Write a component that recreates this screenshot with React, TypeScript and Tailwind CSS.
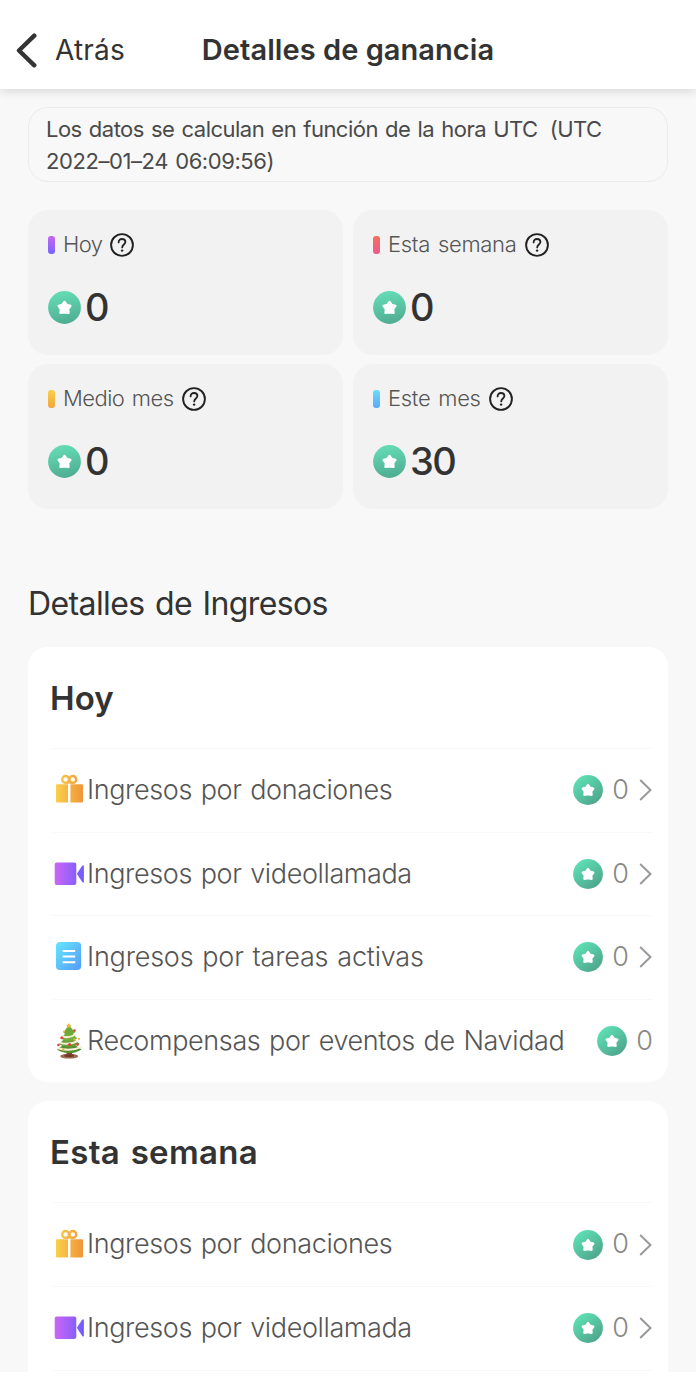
import { useId } from "react";
import type { ReactNode } from "react";
import { clsx } from "clsx";

type IncomeKind = "gift" | "video" | "task" | "christmas";

interface SummaryItem {
  label: string;
  value: number;
  marker: string;
  tracking: string;
}

interface IncomeRow {
  kind: IncomeKind;
  label: string;
  value: number;
  tracking: string;
  link?: boolean;
}

const summary: SummaryItem[] = [
  { label: "Hoy", value: 0, marker: "from-[#c964f2] to-[#7562fb]", tracking: "tracking-[-0.6px]" },
  {
    label: "Esta semana",
    value: 0,
    marker: "from-[#f0715a] to-[#f0588a]",
    tracking: "tracking-[-0.3px]",
  },
  {
    label: "Medio mes",
    value: 0,
    marker: "from-[#f8cf4c] to-[#f0a53c]",
    tracking: "tracking-[-0.55px]",
  },
  {
    label: "Este mes",
    value: 30,
    marker: "from-[#6bdcfb] to-[#5aa8f8]",
    tracking: "tracking-[-0.3px]",
  },
];

const gift: IncomeRow = {
  kind: "gift",
  label: "Ingresos por donaciones",
  value: 0,
  tracking: "tracking-[-0.38px]",
  link: true,
};

const video: IncomeRow = {
  kind: "video",
  label: "Ingresos por videollamada",
  value: 0,
  tracking: "tracking-[-0.38px]",
  link: true,
};

const task: IncomeRow = {
  kind: "task",
  label: "Ingresos por tareas activas",
  value: 0,
  tracking: "tracking-[-0.2px]",
  link: true,
};

const christmas: IncomeRow = {
  kind: "christmas",
  label: "Recompensas por eventos de Navidad",
  value: 0,
  tracking: "tracking-[-0.38px]",
};

export default function App() {
  return (
    <div className="h-[1389px] w-[696px] overflow-hidden bg-white font-['Inter','Liberation_Sans',sans-serif] text-[#333333]">
      <div className="flex h-[1372px] flex-col overflow-hidden bg-[#f8f8f8]">
        <Header />

        <main className="flex flex-col px-7 pt-[18px]">
          <p className="h-[75px] rounded-[20px] border border-[#ebebeb] pt-[5px] pl-[17px] text-[22px] leading-8 tracking-[-0.52px] whitespace-nowrap text-[#4a4a4a] [word-spacing:1.5px]">
            <span className="block">
              Los datos se calculan en función de la hora UTC
              <span className="ml-3">(UTC</span>
            </span>
            <span className="block tracking-[-0.43px]">2022–01–24 06:09:56)</span>
          </p>

          <section className="mt-7 grid grid-cols-2 gap-x-2.5 gap-y-[9px]">
            {summary.map((item) => (
              <SummaryCard key={item.label} {...item} />
            ))}
          </section>

          <h2 className="mt-[75px] h-10 text-[32px] leading-10 tracking-[-0.6px] whitespace-nowrap [word-spacing:2px]">
            Detalles de Ingresos
          </h2>

          <div className="mt-[23px] flex flex-col gap-[19px]">
            <IncomeCard title="Hoy" rows={[gift, video, task, christmas]} />
            <IncomeCard title="Esta semana" rows={[gift, video]} clipped />
          </div>
        </main>
      </div>
    </div>
  );
}

function Header() {
  return (
    <header className="relative grid h-[89px] shrink-0 grid-cols-[1fr_auto_1fr] items-center bg-white px-4 pt-[11px] shadow-[0_2px_10px_rgba(0,0,0,0.14)]">
      <button type="button" className="flex items-center gap-[18px] text-left">
        <svg width="21" height="35" viewBox="0 0 21 35" fill="none" aria-hidden="true">
          <path
            d="M18.3 2.7 3 17.5l15.3 14.8"
            stroke="#333333"
            strokeWidth="4.4"
            strokeLinecap="round"
            strokeLinejoin="round"
          />
        </svg>
        <span className="text-[28px] tracking-[0.2px]">Atrás</span>
      </button>
      <h1 className="text-[29px] font-semibold tracking-[0.05px] whitespace-nowrap">
        Detalles de ganancia
      </h1>
    </header>
  );
}

function SummaryCard({ label, value, marker, tracking }: SummaryItem) {
  return (
    <div className="flex h-[145px] flex-col rounded-[20px] bg-[#f2f2f2] pt-5 pl-5">
      <div className="flex h-[29px] items-center">
        <span className={clsx("h-[18px] w-[7px] rounded-[3px] bg-linear-to-b", marker)} />
        <span
          className={clsx(
            "ml-2 text-[22px] font-light whitespace-nowrap text-[#555555] [word-spacing:2px]",
            tracking,
          )}
        >
          {label}
        </span>
        <HelpIcon />
      </div>
      <div className="mt-[30px] flex h-9 items-center gap-1">
        <Coin size={33} />
        <span className="text-[38px] leading-9 font-medium tracking-[-1.5px]">{value}</span>
      </div>
    </div>
  );
}

function IncomeCard({
  title,
  rows,
  clipped,
}: {
  title: string;
  rows: IncomeRow[];
  clipped?: boolean;
}) {
  return (
    <section className={clsx("bg-white pr-4 pl-[22px]", clipped ? "rounded-t-[20px]" : "rounded-[20px]")}>
      <h3
        className={clsx(
          "flex h-[101px] items-center pt-0.5 text-[33px] font-semibold",
          clipped ? "tracking-[0.3px] [word-spacing:2px]" : "tracking-[0.1px]",
        )}
      >
        {title}
      </h3>
      {rows.map((row) => (
        <div
          key={row.kind}
          className="flex h-[83.6px] items-center border-t border-[#f8f8f8] pl-1 text-[27px]"
        >
          <IncomeIcon kind={row.kind} />
          <span
            className={clsx(
              "ml-px font-light whitespace-nowrap text-[#555555] [word-spacing:1.5px]",
              row.tracking,
            )}
          >
            {row.label}
          </span>
          <span className="ml-auto flex items-center">
            <Coin size={30} diagonal />
            <span className="ml-[9px] font-light tracking-[-1px] text-[#888888]">{row.value}</span>
            {row.link ? (
              <svg className="ml-[11px]" width="13" height="22" viewBox="0 0 13 22" fill="none">
                <path d="m1.2 1 10.3 10L1.2 21" stroke="#999999" strokeWidth="2" />
              </svg>
            ) : null}
          </span>
        </div>
      ))}
      {clipped ? <div className="h-1 border-t border-[#f8f8f8]" /> : null}
    </section>
  );
}

function HelpIcon() {
  return (
    <svg className="mt-px ml-2" width="24" height="24" viewBox="0 0 24 24" fill="none" aria-hidden="true">
      <circle cx="12" cy="12" r="10.9" stroke="#222222" strokeWidth="1.9" />
      <path
        d="M8.6 9.4c0-2 1.4-3.4 3.4-3.4s3.4 1.3 3.4 3c0 2.5-3.2 2.6-3.2 5.4"
        stroke="#222222"
        strokeWidth="1.8"
        strokeLinecap="round"
      />
      <circle cx="12.1" cy="17.6" r="1.2" fill="#222222" />
    </svg>
  );
}

function Coin({ size, diagonal }: { size: number; diagonal?: boolean }) {
  const id = useId();

  return (
    <svg width={size} height={size} viewBox="0 0 33 33" className="shrink-0" aria-hidden="true">
      <defs>
        <linearGradient id={id} x1={diagonal ? "0.1" : "0.4"} y1="0" x2={diagonal ? "0.9" : "0.6"} y2="1">
          <stop stopColor={diagonal ? "#5fe6b8" : "#65dcb6"} />
          <stop offset="1" stopColor={diagonal ? "#4d9f88" : "#4fac90"} />
        </linearGradient>
      </defs>
      <circle cx="16.5" cy="16.5" r="16.4" fill={`url(#${id})`} />
      <path
        d="m16.5 11 2 2.800 3.900 1.100-2.300 3.200.400 3.800-4-.700-4 .700.400-3.800-2.300-3.200 3.900-1.100Z"
        fill="white"
        stroke="white"
        strokeWidth="2.4"
        strokeLinejoin="round"
      />
    </svg>
  );
}

function IconFrame({ children }: { children: ReactNode }) {
  return (
    <svg width="32" height="36" viewBox="0 0 32 36" className="shrink-0" aria-hidden="true">
      {children}
    </svg>
  );
}

function IncomeIcon({ kind }: { kind: IncomeKind }) {
  const id = useId();

  switch (kind) {
    case "gift":
      return (
        <IconFrame>
          <defs>
            <linearGradient id={id} x1="2" y1="0" x2="29" y2="0" gradientUnits="userSpaceOnUse">
              <stop stopColor="#fbcf4c" />
              <stop offset="1" stopColor="#f0953a" />
            </linearGradient>
          </defs>
          <path
            d="M3 12.2h11v18.4H3a1 1 0 0 1-1-1V13.2a1 1 0 0 1 1-1ZM16.4 12.2H28a1 1 0 0 1 1 1v16.4a1 1 0 0 1-1 1H16.4Z"
            fill={`url(#${id})`}
          />
          <g fill="none" stroke={`url(#${id})`} strokeWidth="2.4">
            <circle cx="11.6" cy="7.4" r="3.4" />
            <circle cx="18.8" cy="7.4" r="3.4" />
            <path d="M13 10.5h4.6" />
          </g>
        </IconFrame>
      );
    case "video":
      return (
        <IconFrame>
          <defs>
            <linearGradient id={id} x1="0" y1="0" x2="30" y2="0" gradientUnits="userSpaceOnUse">
              <stop stopColor="#cf66f5" />
              <stop offset="1" stopColor="#6f5cfb" />
            </linearGradient>
          </defs>
          <rect x="0.7" y="6.6" width="21.6" height="22.4" rx="2" fill={`url(#${id})`} />
          <path d="m22.8 17.8 5.4-8q1.7-1.4 1.7.6v15q0 2-1.7.6Z" fill={`url(#${id})`} />
        </IconFrame>
      );
    case "task":
      return (
        <IconFrame>
          <defs>
            <linearGradient id={id} x1="0" y1="0" x2="1" y2="1">
              <stop stopColor="#66e6ff" />
              <stop offset="1" stopColor="#559bf8" />
            </linearGradient>
          </defs>
          <rect x="2" y="3" width="25.2" height="28" rx="4" fill={`url(#${id})`} />
          <path d="M8.6 12h12.6M8.6 17.5h12.6M8.6 23.3h12.6" stroke="white" strokeWidth="2" />
        </IconFrame>
      );
    case "christmas":
      return (
        <IconFrame>
          <path d="M13.3 27h4l1 4.6h-6Z" fill="#79422b" />
          <ellipse cx="15.2" cy="33.2" rx="9" ry="2.4" fill="#a06a52" />
          <ellipse cx="15.2" cy="32.6" rx="5" ry="1.6" fill="#6f3d28" />
          <path d="M14.8 18 3 26.6q4.500 3.400 11.800 3.400t12.800-3.600Z" fill="#568f30" />
          <path d="M14.800 12 4.800 21q4 2.800 10 2.800T25.800 21Z" fill="#679f38" />
          <path d="M14.800 6.400 6.800 15.400q3.200 2.400 8 2.400t8.400-2.400Z" fill="#74b03c" />
          <path d="M14.800 1.600 9.400 9.800q2.200 2 5.400 2T21 9.800Z" fill="#6fa83a" />
          <path
            d="M8 13.500q7 2.200 13.500-2M5.800 19.600q9 3.200 18.200-1.800M4.200 25.200q13 3.600 24-1.600"
            fill="none"
            stroke="#f6f1d8"
            strokeWidth="2"
          />
          <path d="m14.800 0 .9 1.800 1.900.2-1.400 1.300.4 1.900-1.800-1-1.800 1 .4-1.900L12 2l1.900-.2Z" fill="#e8b640" />
          <g fill="#d9473b">
            <circle cx="20.500" cy="7.600" r="1.300" />
            <circle cx="7.800" cy="14.800" r="1.500" />
            <circle cx="15.500" cy="21.600" r="1.600" />
            <circle cx="4.400" cy="22" r="1.300" />
            <circle cx="23.600" cy="21.600" r="1.300" />
          </g>
          <g fill="#f0b23e">
            <circle cx="9.200" cy="26.200" r="1.200" />
            <circle cx="20.500" cy="16.600" r="1.200" />
            <circle cx="25" cy="15.800" r="1.100" />
            <circle cx="10" cy="8.600" r="1" />
          </g>
        </IconFrame>
      );
  }
}
